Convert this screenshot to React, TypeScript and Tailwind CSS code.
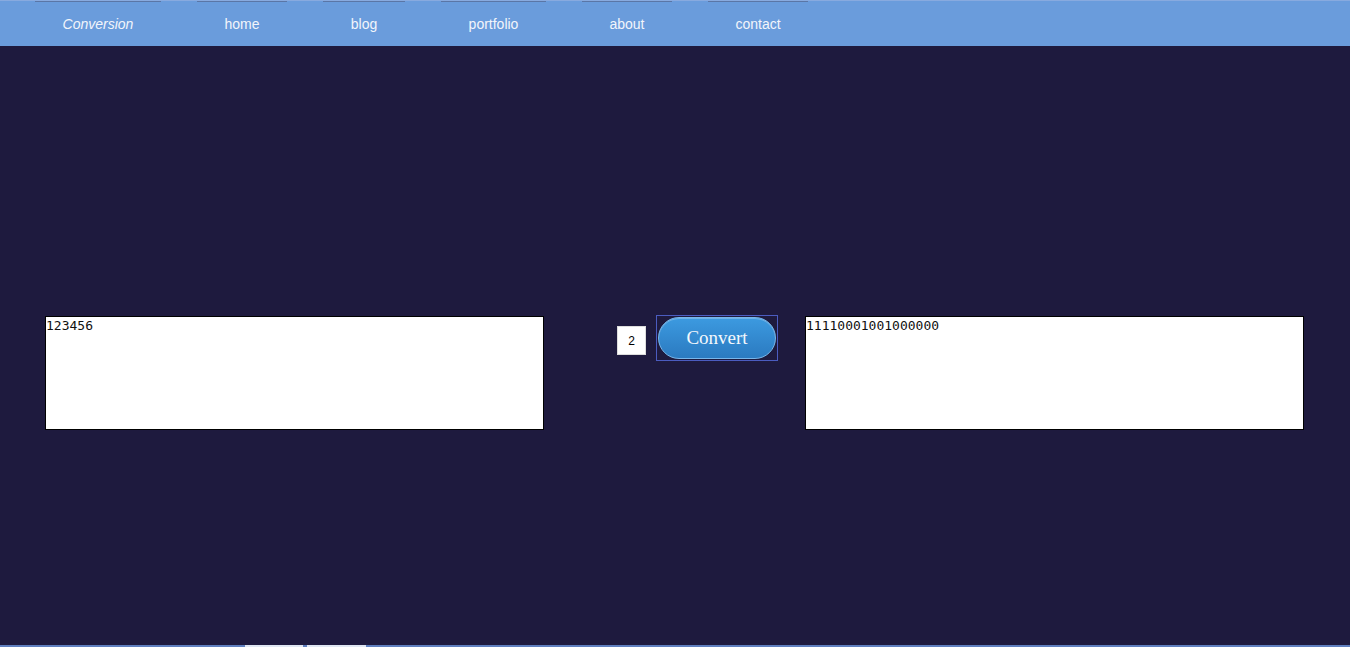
import { useState } from 'react';

// label + fixed width of each nav tab (top rule spans the whole tab)
const navItems = [
  { label: 'Conversion', width: 'w-[126px]', italic: true },
  { label: 'home', width: 'w-[90px]' },
  { label: 'blog', width: 'w-[82px]' },
  { label: 'portfolio', width: 'w-[105px]' },
  { label: 'about', width: 'w-[90px]' },
  { label: 'contact', width: 'w-[100px]' },
];

export default function App() {
  const [input, setInput] = useState('123456');
  const [base, setBase] = useState('2');
  const [output, setOutput] = useState('11110001001000000');

  const handleConvert = () => {
    const n = parseInt(input, 10);
    const b = parseInt(base, 10);
    if (!isNaN(n) && b >= 2 && b <= 36) setOutput(n.toString(b));
  };

  return (
    <div className="flex h-[647px] flex-col overflow-hidden bg-[#1e1a3e] font-['Liberation_Sans',Arial,sans-serif]">
      {/* Nav */}
      <nav className="flex h-[46px] shrink-0 border-t border-[#88aadf] bg-[#6a9cdc] pl-[35px]">
        <div className="flex gap-[36px]">
          {navItems.map((item) => (
            <a
              key={item.label}
              className={`flex h-[45px] items-center justify-center border-t border-[#5a76a6] pt-[1px] text-[14px] text-[#f2f5fb] ${item.width} ${item.italic ? 'italic' : ''}`}
            >
              {item.label}
            </a>
          ))}
        </div>
      </nav>

      {/* Converter */}
      <main className="flex flex-1 items-start pl-[45px] pt-[269px]">
        <textarea
          value={input}
          onChange={(e) => setInput(e.target.value)}
          className="mt-[1px] h-[114px] w-[499px] resize-none border border-black bg-white p-0 font-['DejaVu_Sans_Mono',monospace] text-[13px] leading-[17px] text-[#111] outline-none"
        />
        <input
          value={base}
          onChange={(e) => setBase(e.target.value)}
          className="ml-[73px] mt-[11px] h-[29px] w-[29px] border border-[#ddd] bg-white text-center text-[12px] text-black outline-none"
        />
        <div className="ml-[10px] flex h-[46px] w-[122px] items-center justify-center border border-[#4b5cc0]">
          <button
            type="button"
            onClick={handleConvert}
            className="h-[42px] w-[118px] rounded-full border border-[#78b6ea] bg-gradient-to-b from-[#3c9ae0] to-[#2b7ac0] pt-[1px] font-['Liberation_Serif',serif] text-[19px] font-medium text-[#f4f8fc] shadow-[inset_0_1px_0_rgba(255,255,255,0.25)]"
          >
            Convert
          </button>
        </div>
        <textarea
          value={output}
          readOnly
          className="ml-[27px] mt-[1px] h-[114px] w-[499px] resize-none border border-black bg-white p-0 font-['DejaVu_Sans_Mono',monospace] text-[13px] leading-[17px] text-[#111] outline-none"
        />
      </main>

      {/* Bottom strip */}
      <div className="flex h-[2px] shrink-0 bg-[#5f7fbf]">
        <div className="ml-[245px] w-[58px] bg-[#dfe6f2]" />
        <div className="ml-[4px] w-[59px] bg-[#dfe6f2]" />
      </div>
    </div>
  );
}
